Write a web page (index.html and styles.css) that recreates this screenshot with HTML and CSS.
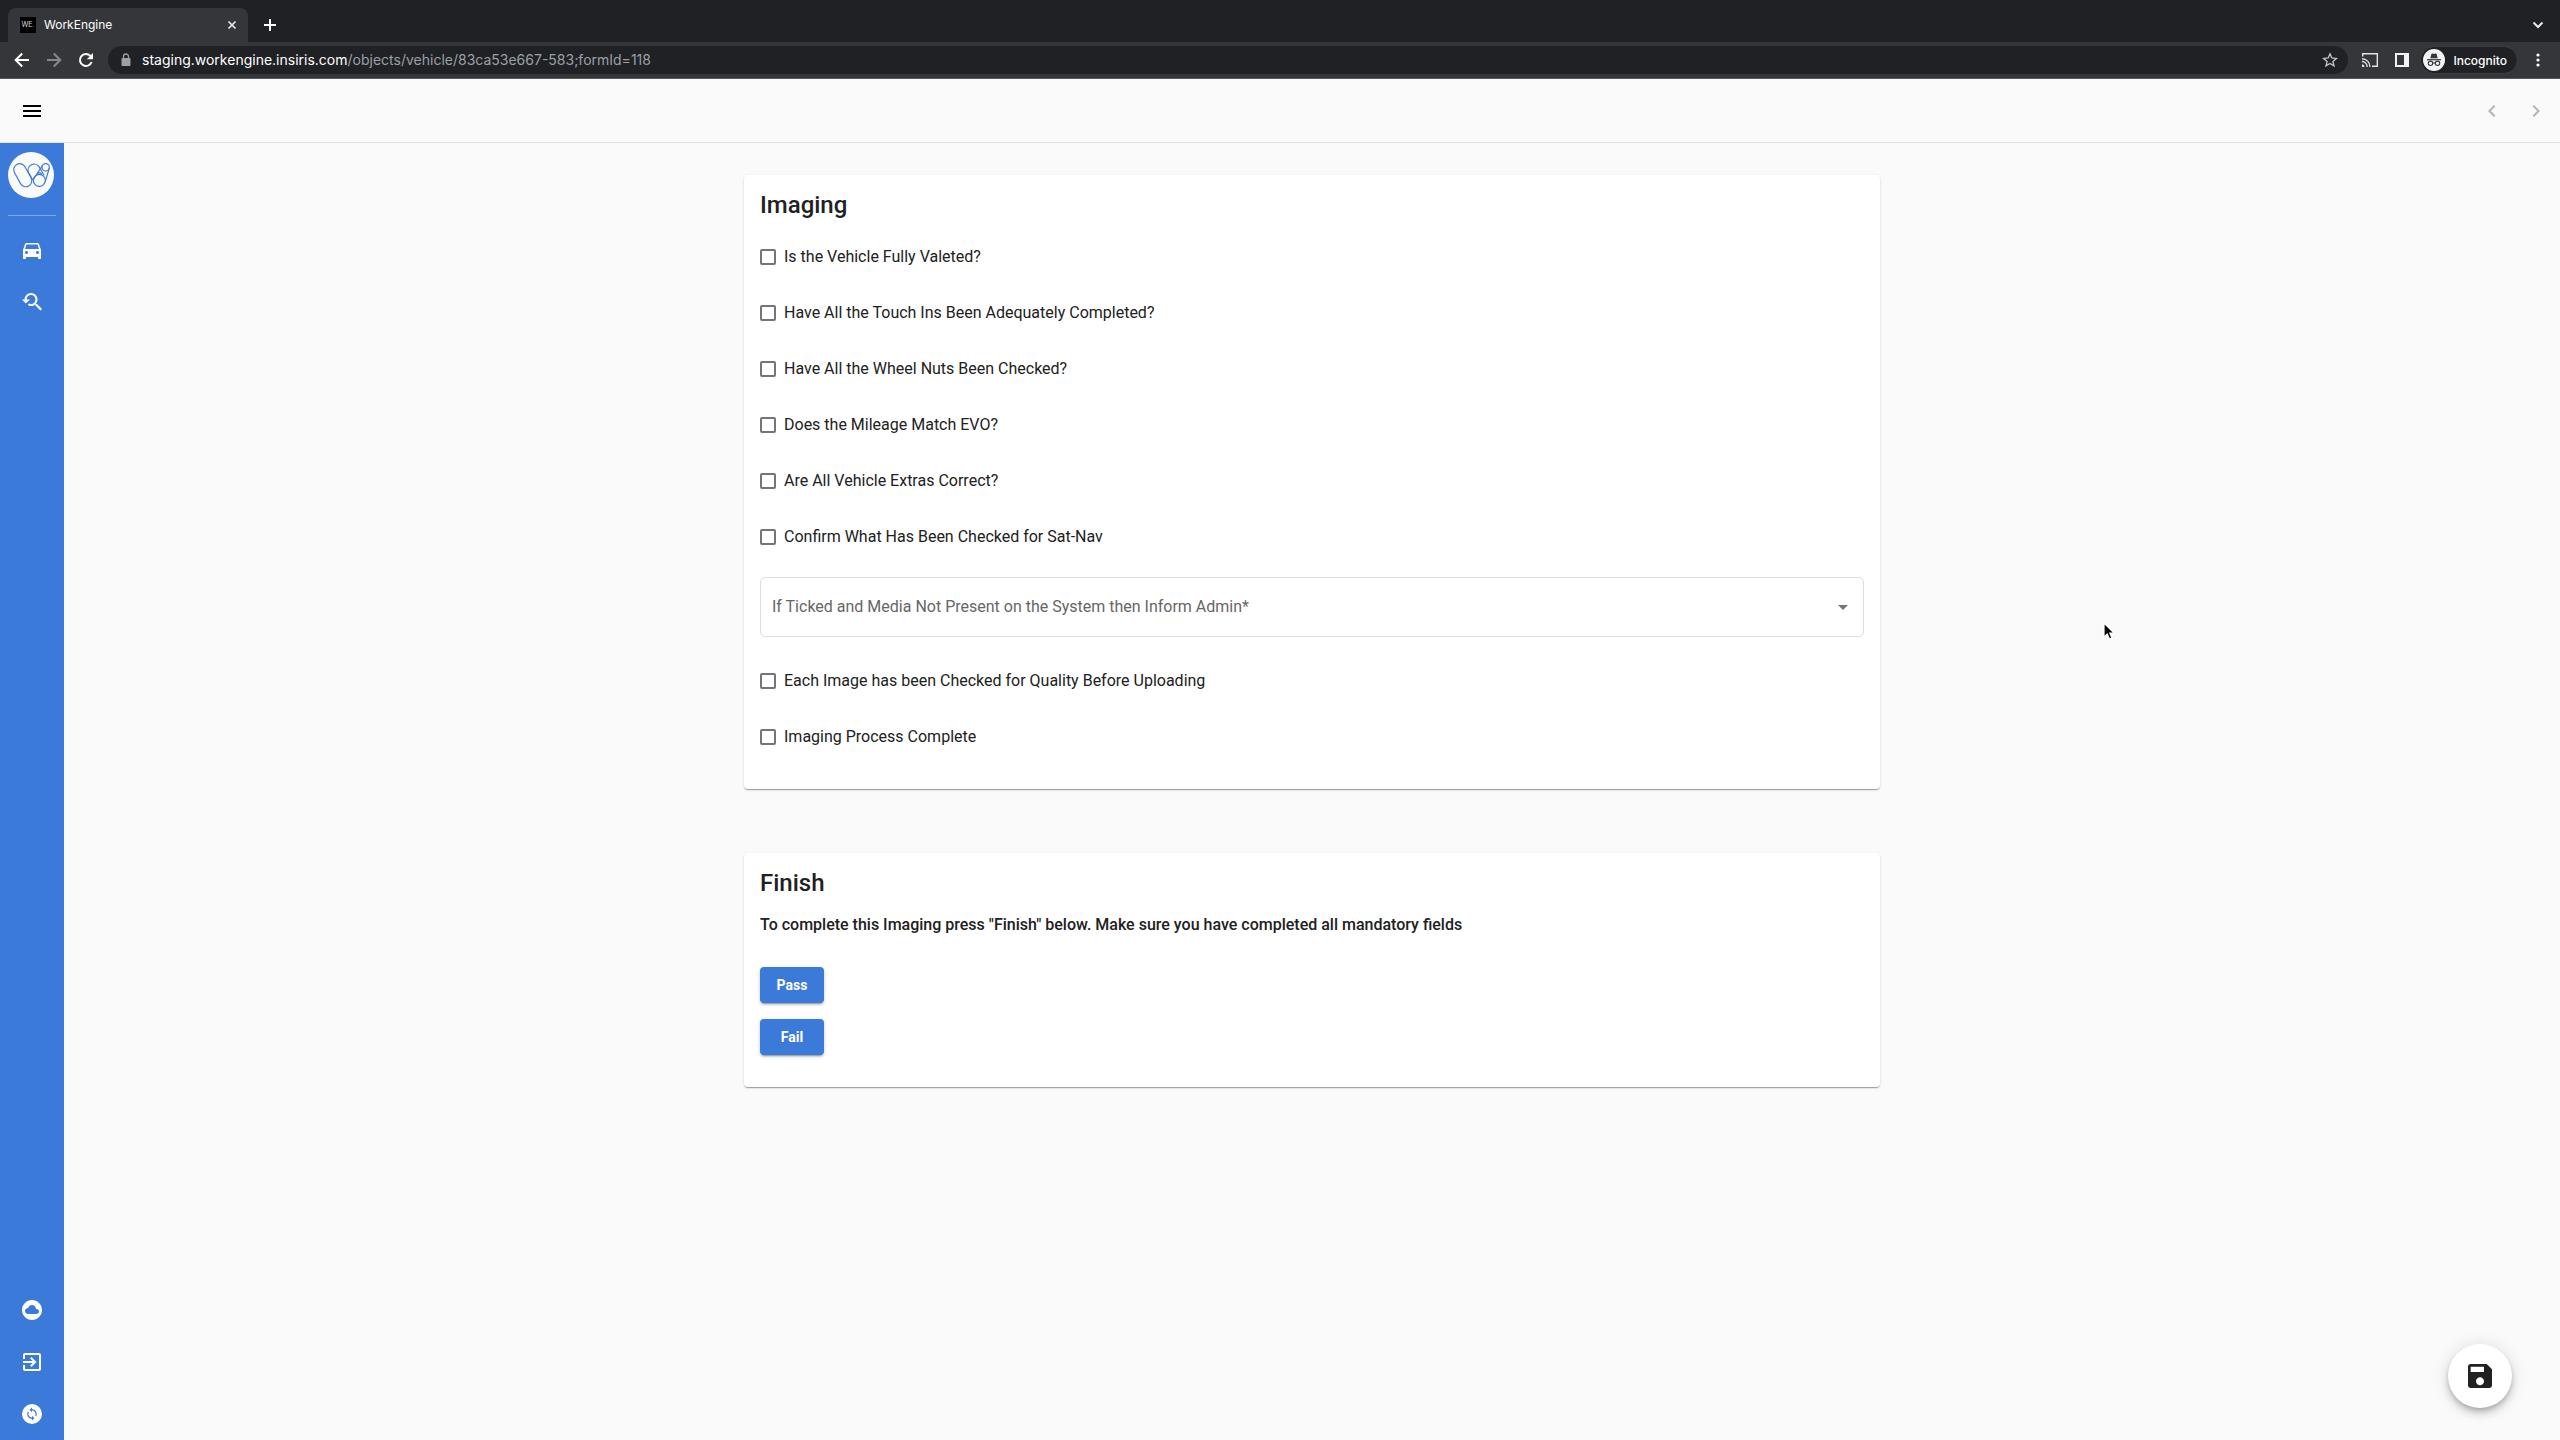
FILE: index.html
```html
<!DOCTYPE html>
<html lang="en">
<head>
    <meta charset="UTF-8">
    <meta name="viewport" content="width=device-width, initial-scale=1.0">
    <title>WorkEngine</title>
    <link rel="stylesheet" href="styles.css">
</head>
<body>

<!-- Browser window -->
<div class="browser">
    <div class="tab-strip">
        <div class="tab">
            <span class="favicon">WE<i>.</i></span>
            <span class="tab-title">WorkEngine</span>
            <button type="button" class="icon-btn tab-close" aria-label="Close tab">
                <svg width="16" height="16" viewBox="0 0 16 16"><path d="M4.5 4.5l7 7M11.5 4.5l-7 7" stroke="#e8eaed" stroke-width="1.7"/></svg>
            </button>
        </div>
        <button type="button" class="icon-btn new-tab" aria-label="New tab">
            <svg width="16" height="16" viewBox="0 0 16 16"><path d="M8 2v12M2 8h12" stroke="#fff" stroke-width="2"/></svg>
        </button>
        <button type="button" class="icon-btn tab-search" aria-label="Search tabs">
            <svg width="16" height="16" viewBox="0 0 16 16"><path d="M3.5 5.5L8 10l4.5-4.5" fill="none" stroke="#e8eaed" stroke-width="2"/></svg>
        </button>
    </div>
    <div class="toolbar">
        <div class="nav-buttons">
            <button type="button" class="icon-btn" aria-label="Back">
                <svg width="16" height="16" viewBox="0 0 16 16"><path d="M15 8H2.500M8.200 1.500L1.700 8l6.500 6.500" fill="none" stroke="#fff" stroke-width="2"/></svg>
            </button>
            <button type="button" class="icon-btn" aria-label="Forward">
                <svg width="16" height="16" viewBox="0 0 16 16"><path d="M1 8h12.500M7.800 1.500L14.300 8l-6.500 6.500" fill="none" stroke="#87888b" stroke-width="2"/></svg>
            </button>
            <button type="button" class="icon-btn" aria-label="Reload">
                <svg width="16" height="16" viewBox="0 0 16 16"><path d="M13.600 10A6 6 0 1 1 12.300 3.800L14 5.500" fill="none" stroke="#fff" stroke-width="2"/><path d="M15 1v6.200H8.800z" fill="#fff"/></svg>
            </button>
        </div>
        <div class="omnibox">
            <svg width="16" height="16" viewBox="0 0 16 16"><rect x="3.500" y="6" width="9" height="8" rx="1" fill="#9aa0a6"/><path d="M5.500 6.500V4.500a2.500 2.500 0 0 1 5 0v2" fill="none" stroke="#9aa0a6" stroke-width="1.300"/></svg>
            <div class="url" role="textbox" aria-label="Address" contenteditable="true" spellcheck="false"><span>staging.workengine.insiris.com</span>/objects/vehicle/83ca53e667-583;formId=118</div>
            <button type="button" class="icon-btn" aria-label="Bookmark">
                <svg width="16" height="16" viewBox="0 0 16 16"><path d="M8 1.800l1.800 4.200 4.600.4-3.500 3 1.100 4.500L8 11.500l-4 2.400 1.100-4.500-3.500-3 4.600-.4z" fill="none" stroke="#c4c7ca" stroke-width="1.300"/></svg>
            </button>
        </div>
        <div class="tools">
            <button type="button" class="icon-btn" aria-label="Cast">
                <svg width="16" height="16" viewBox="0 0 16 16"><path d="M.700 4.500V1.700h14.600v12.600H10" fill="none" stroke="#dfe1e5" stroke-width="1.400"/><path d="M0 6.700A7.800 7.800 0 0 1 7.800 14.900M0 9.500a5.300 5.300 0 0 1 5.200 5.400" fill="none" stroke="#dfe1e5" stroke-width="1.400"/><path d="M0 12.300a2.600 2.600 0 0 1 2.500 2.600H0z" fill="#dfe1e5"/></svg>
            </button>
            <button type="button" class="icon-btn" aria-label="Side panel">
                <svg width="16" height="16" viewBox="0 0 16 16"><path fill-rule="evenodd" d="M1 1h14v14H1zM3 3v10h7V3z" fill="#f1f3f4"/></svg>
            </button>
            <button type="button" class="incognito">
                <svg width="22" height="22" viewBox="0 0 22 22"><circle cx="11" cy="11" r="11" fill="#f1f3f4"/><path d="M7.300 9.200L8.400 5q.3-.8 1.200-.5l1.400.4 1.400-.4q.9-.3 1.200.5l1.100 4.200z" fill="#35363a"/><path d="M4 10.700h14" stroke="#35363a" stroke-width="1.200"/><g fill="none" stroke="#35363a" stroke-width="1.100"><circle cx="7.500" cy="14.300" r="2.200"/><circle cx="14.500" cy="14.300" r="2.200"/><path d="M9.700 14.200q1.300-.9 2.600 0"/></g></svg>
                Incognito
            </button>
            <button type="button" class="icon-btn" aria-label="Menu">
                <svg width="16" height="16" viewBox="0 0 16 16" fill="#fff"><circle cx="8" cy="3" r="1.600"/><circle cx="8" cy="8" r="1.600"/><circle cx="8" cy="13" r="1.600"/></svg>
            </button>
        </div>
    </div>
</div>

<!-- Page header -->
<header class="top-bar">
    <button type="button" class="icon-btn" aria-label="Toggle menu">
        <svg width="24" height="24" viewBox="0 0 24 24"><path d="M3 18h18v-2H3v2zm0-5h18v-2H3v2zm0-7v2h18V6H3z"/></svg>
    </button>
    <div class="pager">
        <button type="button" class="icon-btn" aria-label="Previous">
            <svg width="24" height="24" viewBox="0 0 24 24"><path d="M15.410 7.410L14 6l-6 6 6 6 1.410-1.410L10.830 12z"/></svg>
        </button>
        <button type="button" class="icon-btn" aria-label="Next">
            <svg width="24" height="24" viewBox="0 0 24 24"><path d="M10 6L8.590 7.410 13.170 12l-4.580 4.590L10 18l6-6z"/></svg>
        </button>
    </div>
</header>

<div class="layout">
    <nav class="sidebar">
        <a href="#" class="logo" aria-label="WorkEngine home">
            <svg width="46" height="46" viewBox="0 0 138 138">
                <circle cx="69" cy="69" r="69" fill="#fafafa"/>
                <g fill="none" stroke="#3b7ad9" stroke-width="3.500">
                    <rect x="-18" y="-18" width="74" height="36" rx="18" transform="translate(35 53) rotate(61)"/>
                    <path d="M74 84L62 62a18 18 0 0 1 31-18l15 26"/>
                    <circle cx="94" cy="85" r="18"/>
                    <circle cx="113" cy="46" r="11"/>
                    <path d="M104 40L76 82M124 48l-12 40M86 65q8-5 16 0"/>
                </g>
            </svg>
        </a>
        <hr>
        <a href="#" aria-label="Vehicles">
            <svg width="24" height="24" viewBox="0 0 24 24"><path d="M18.920 6.010C18.720 5.420 18.160 5 17.500 5h-11c-.66 0-1.210.42-1.420 1.010L3 12v8c0 .55.45 1 1 1h1c.55 0 1-.45 1-1v-1h12v1c0 .55.45 1 1 1h1c.55 0 1-.45 1-1v-8l-2.080-5.990zM6.500 16c-.83 0-1.500-.67-1.500-1.500S5.670 13 6.500 13s1.500.67 1.500 1.500S7.330 16 6.500 16zm11 0c-.83 0-1.500-.67-1.500-1.500s.67-1.500 1.500-1.500 1.500.67 1.500 1.500-.67 1.500-1.500 1.500zM5 11l1.500-4.500h11L19 11H5z"/></svg>
        </a>
        <a href="#" aria-label="Search">
            <svg width="24" height="24" viewBox="0 0 24 24"><path d="M17.010 14h-.8l-.27-.27c.98-1.140 1.570-2.610 1.570-4.230 0-3.590-2.910-6.500-6.500-6.500s-6.500 3-6.500 6.500H2l3.840 4 4.160-4H6.510C6.510 7 8.530 5 11.010 5s4.500 2.010 4.500 4.500c0 2.480-2.020 4.500-4.500 4.500-.65 0-1.260-.14-1.820-.38L7.710 15.100c.97.57 2.090.9 3.300.9 1.610 0 3.080-.59 4.220-1.570l.27.27v.79l5.010 4.990L22 19l-4.990-5z"/></svg>
        </a>
        <div class="sidebar-bottom">
            <a href="#" aria-label="Cloud">
                <svg width="24" height="24" viewBox="0 0 24 24"><path d="M12 2C6.480 2 2 6.480 2 12s4.480 10 10 10 10-4.480 10-10S17.520 2 12 2zm4.500 14H8c-1.660 0-3-1.340-3-3s1.340-3 3-3l.14.010C8.580 8.280 10.130 7 12 7c2.210 0 4 1.790 4 4h.5c1.380 0 2.500 1.120 2.500 2.500S17.880 16 16.500 16z"/></svg>
            </a>
            <a href="#" aria-label="Log out">
                <svg width="24" height="24" viewBox="0 0 24 24"><path d="M10.090 15.590L11.500 17l5-5-5-5-1.410 1.410L12.670 11H3v2h9.670l-2.580 2.590zM19 3H5c-1.110 0-2 .9-2 2v4h2V5h14v14H5v-4H3v4c0 1.100.89 2 2 2h14c1.100 0 2-.9 2-2V5c0-1.100-.9-2-2-2z"/></svg>
            </a>
            <a href="#" aria-label="Sync">
                <svg width="24" height="24" viewBox="0 0 24 24"><circle cx="12" cy="12" r="10"/><path fill="#3b7ad9" transform="translate(4.800 4.800) scale(.6)" d="M12 4V1L8 5l4 4V6c3.310 0 6 2.690 6 6 0 1.010-.25 1.970-.7 2.800l1.460 1.460C19.540 15.030 20 13.570 20 12c0-4.420-3.580-8-8-8zm0 14c-3.310 0-6-2.690-6-6 0-1.010.25-1.970.7-2.800L5.240 7.740C4.460 8.970 4 10.430 4 12c0 4.420 3.580 8 8 8v3l4-4-4-4v3z"/></svg>
            </a>
        </div>
    </nav>

    <main>
        <form>
            <section class="card">
                <h2>Imaging</h2>
                <div class="fields">
                    <label class="check"><input type="checkbox" name="valeted">Is the Vehicle Fully Valeted?</label>
                    <label class="check"><input type="checkbox" name="touch-ins">Have All the Touch Ins Been Adequately Completed?</label>
                    <label class="check"><input type="checkbox" name="wheel-nuts">Have All the Wheel Nuts Been Checked?</label>
                    <label class="check"><input type="checkbox" name="mileage">Does the Mileage Match EVO?</label>
                    <label class="check"><input type="checkbox" name="extras">Are All Vehicle Extras Correct?</label>
                    <label class="check"><input type="checkbox" name="sat-nav">Confirm What Has Been Checked for Sat-Nav</label>
                    <div class="select-field">
                        <select name="media" aria-label="If Ticked and Media Not Present on the System then Inform Admin" required>
                            <option value="">If Ticked and Media Not Present on the System then Inform Admin*</option>
                        </select>
                    </div>
                    <label class="check"><input type="checkbox" name="quality">Each Image has been Checked for Quality Before Uploading</label>
                    <label class="check"><input type="checkbox" name="complete">Imaging Process Complete</label>
                </div>
            </section>

            <section class="card">
                <h2>Finish</h2>
                <p>To complete this Imaging press "Finish" below. Make sure you have completed all mandatory fields</p>
                <div class="actions">
                    <button type="button" class="btn">Pass</button>
                    <button type="button" class="btn">Fail</button>
                </div>
            </section>
        </form>
    </main>
</div>

<button type="button" class="save" aria-label="Save">
    <svg width="32" height="32" viewBox="0 0 24 24"><path d="M17 3H5c-1.110 0-2 .9-2 2v14c0 1.100.89 2 2 2h14c1.100 0 2-.9 2-2V7l-4-4zm-5 16c-1.660 0-3-1.340-3-3s1.340-3 3-3 3 1.340 3 3-1.340 3-3 3zm3-10H5V5h10v4z"/></svg>
</button>

<!-- Mouse pointer -->
<svg class="pointer" width="14" height="20" viewBox="0 0 14 20"><path d="M1 1v14l3.200-3 2.300 5 2.500-1.100-2.200-4.900H11z" fill="#000" stroke="#fff" stroke-width="1.200"/></svg>

</body>
</html>
```
FILE: styles.css
```css
* {
    box-sizing: border-box;
}

body {
    font-family: Roboto, "Liberation Sans", sans-serif;
    font-size: 16px;
    line-height: 24px;
    color: #212121;
    margin: 0;
    min-height: 100vh;
    display: flex;
    flex-direction: column;
    position: relative;
    background-color: #fafafa;
}

svg {
    display: block;
    flex-shrink: 0;
}

.icon-btn {
    display: block;
    padding: 0;
    border: none;
    background: none;
    cursor: pointer;
}

/* Browser window */
.browser {
    font-family: Inter, "Liberation Sans", sans-serif;
    color: #fff;
    background-color: #202124;
}

.tab-strip {
    display: flex;
    align-items: center;
    height: 42px;
    padding: 8px 14px 0 8px;
}

.tab {
    display: flex;
    align-items: center;
    gap: 8px;
    width: 240px;
    height: 34px;
    padding: 0 8px 0 12px;
    background-color: #35363a;
    border-radius: 8px 8px 0 0;
    font-size: 12px;
}

.favicon {
    width: 16px;
    height: 16px;
    background-color: #000;
    color: #ddd;
    font-size: 7px;
    line-height: 16px;
    text-align: center;
}

.favicon i {
    color: #3b7ad9;
}

.tab-close {
    margin-left: auto;
}

.new-tab {
    margin-left: 14px;
}

.tab-search {
    margin-left: auto;
}

.toolbar {
    display: flex;
    align-items: center;
    height: 37px;
    padding: 0 14px;
    background-color: #35363a;
    border-bottom: 1px solid #55575b;
}

.nav-buttons {
    display: flex;
    gap: 16px;
    margin-right: 14px;
}

.omnibox {
    flex: 1;
    display: flex;
    align-items: center;
    gap: 8px;
    height: 28px;
    padding: 0 10px;
    background-color: #202124;
    border-radius: 14px;
}

.url {
    flex: 1;
    font-size: 14px;
    color: #9aa0a6;
    white-space: nowrap;
}

.url span {
    color: #fff;
}

.tools {
    display: flex;
    align-items: center;
    gap: 16px;
    margin-left: 14px;
}

.incognito {
    display: flex;
    align-items: center;
    gap: 8px;
    height: 28px;
    margin: 0 -4px 0 -6px;
    padding: 0 10px 0 2px;
    border: 1px solid #3c4043;
    border-radius: 14px;
    background-color: #202124;
    color: #fff;
    font: 500 12px Inter, "Liberation Sans", sans-serif;
}

/* Page header */
.top-bar {
    display: flex;
    align-items: center;
    justify-content: space-between;
    height: 64px;
    padding: 0 12px 0 20px;
    border-bottom: 1px solid #e3e3e3;
}

.pager {
    display: flex;
    gap: 20px;
}

.pager svg {
    fill: #b4b4b4;
}

.layout {
    flex: 1;
    display: flex;
}

/* Side menu */
.sidebar {
    display: flex;
    flex-direction: column;
    align-items: center;
    gap: 28px;
    width: 64px;
    padding: 9px 8px 14px;
    background-color: #3b7ad9;
}

.sidebar svg {
    fill: #fff;
}

.sidebar .logo {
    align-self: flex-start;
}

.sidebar hr {
    width: 100%;
    height: 1px;
    margin: -11px 0 -6px;
    border: none;
    background-color: #7da6e6;
}

.sidebar-bottom {
    display: flex;
    flex-direction: column;
    gap: 28px;
    margin-top: auto;
}

/* Form */
main {
    flex: 1;
    padding: 32px 16px;
}

form {
    display: flex;
    flex-direction: column;
    gap: 64px;
    max-width: 1136px;
    margin: 0 auto;
}

.card {
    padding: 16px 16px 32px;
    background-color: #fff;
    border-radius: 4px;
    box-shadow: 0 2px 1px -1px rgba(0, 0, 0, 0.2), 0 1px 1px rgba(0, 0, 0, 0.14), 0 1px 3px rgba(0, 0, 0, 0.12);
}

.card h2 {
    margin: 0 0 16px;
    font-size: 24px;
    font-weight: 500;
    line-height: 28px;
}

.card p {
    margin: 0 0 30px;
    font-weight: 500;
}

.fields {
    display: flex;
    flex-direction: column;
    gap: 32px;
    padding: 10px 0 8px;
}

.check {
    display: flex;
    align-items: center;
    gap: 8px;
    width: fit-content;
}

.check input {
    appearance: none;
    width: 16px;
    height: 16px;
    margin: 0;
    border: 2px solid #757575;
    border-radius: 2px;
    background-color: #fff;
}

.check input:checked {
    border-color: #3b7ad9;
    background-color: #3b7ad9;
}

.select-field {
    position: relative;
    margin-top: -4px;
}

.select-field::after {
    content: "";
    position: absolute;
    right: 16px;
    top: 28px;
    border: 5px solid transparent;
    border-top-color: #757575;
    border-bottom: none;
    pointer-events: none;
}

.select-field select {
    appearance: none;
    display: block;
    width: 100%;
    height: 60px;
    padding: 0 32px 0 11px;
    border: 1px solid #dedede;
    border-radius: 5px;
    background-color: #fff;
    color: #666;
    font: inherit;
}

.actions {
    display: flex;
    flex-direction: column;
    align-items: flex-start;
    gap: 16px;
}

.btn {
    min-width: 64px;
    height: 36px;
    padding: 0 16px;
    border: none;
    border-radius: 4px;
    background-color: #3b7ad9;
    color: #fff;
    font: 700 14px Roboto, "Liberation Sans", sans-serif;
    box-shadow: 0 3px 1px -2px rgba(0, 0, 0, 0.2), 0 2px 2px rgba(0, 0, 0, 0.14), 0 1px 5px rgba(0, 0, 0, 0.12);
    cursor: pointer;
}

/* Floating save button */
.save {
    position: fixed;
    right: 48px;
    bottom: 32px;
    display: flex;
    align-items: center;
    justify-content: center;
    width: 64px;
    height: 64px;
    padding: 0;
    border: none;
    border-radius: 50%;
    background-color: #fff;
    box-shadow: 0 3px 5px -1px rgba(0, 0, 0, 0.2), 0 6px 10px rgba(0, 0, 0, 0.14), 0 1px 18px rgba(0, 0, 0, 0.12);
    cursor: pointer;
}

.save svg {
    fill: #212121;
}

.pointer {
    position: absolute;
    top: 622px;
    right: 443px;
    pointer-events: none;
}
```
